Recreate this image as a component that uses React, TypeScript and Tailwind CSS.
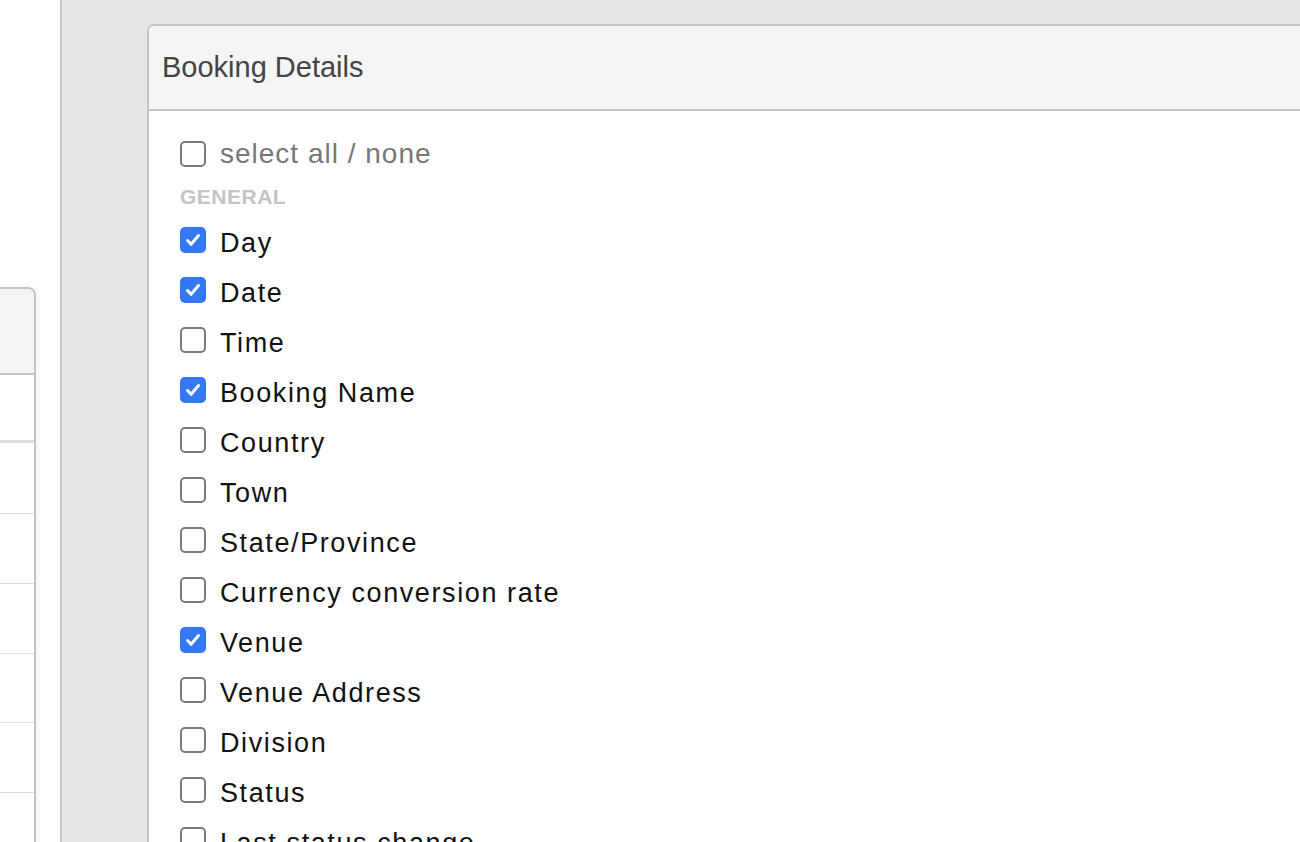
import React from 'react'

const fields: { label: string; checked: boolean }[] = [
  { label: 'Day', checked: true },
  { label: 'Date', checked: true },
  { label: 'Time', checked: false },
  { label: 'Booking Name', checked: true },
  { label: 'Country', checked: false },
  { label: 'Town', checked: false },
  { label: 'State/Province', checked: false },
  { label: 'Currency conversion rate', checked: false },
  { label: 'Venue', checked: true },
  { label: 'Venue Address', checked: false },
  { label: 'Division', checked: false },
  { label: 'Status', checked: false },
  { label: 'Last status change', checked: false },
]

const Box = (props: { checked: boolean }) => {
  const { checked } = props
  if (checked) {
    return (
      <span className="flex h-[26px] w-[26px] shrink-0 items-center justify-center rounded-[5px] bg-[#3478f6]">
        <svg width="20" height="20" viewBox="0 0 20 20" fill="none">
          <path d="M4.5 10.5l3.6 3.8L15.5 5.5" stroke="white" strokeWidth="3" strokeLinecap="round" strokeLinejoin="round" />
        </svg>
      </span>
    )
  }
  return <span className="h-[26px] w-[26px] shrink-0 rounded-[5px] border-2 border-[#7b7b7b] bg-white" />
}

const App = () => {
  return (
    <div className="flex h-[842px] w-[1300px] overflow-hidden bg-white font-['Liberation_Sans',Arial,sans-serif]">
      {/* left column, mostly off screen */}
      <div className="w-[60px] shrink-0 bg-white">
        <div className="mt-[287px] w-[36px] rounded-tr-[8px] border-t-2 border-r-2 border-[#c4c4c4] shadow-[3px_0_4px_rgba(0,0,0,0.04)]">
          <div className="h-[86px] rounded-tr-[6px] border-b-2 border-[#c4c4c4] bg-[#f5f5f5]" />
          <div className="h-[68px] border-b-[3px] border-[#dedede]" />
          <div className="h-[71px] border-b border-[#dedede]" />
          <div className="h-[70px] border-b border-[#dedede]" />
          <div className="h-[70px] border-b border-[#dedede]" />
          <div className="h-[69px] border-b border-[#dedede]" />
          <div className="h-[70px] border-b border-[#dedede]" />
          <div className="h-[70px]" />
        </div>
      </div>

      {/* main gray area */}
      <div className="flex-1 border-l-2 border-[#c4c4c4] bg-[#e6e6e6] pl-[85px] pt-[24px]">
        <div className="h-[900px] rounded-tl-[7px] border-t-2 border-l-2 border-[#c4c4c4] bg-white">
          <div className="flex h-[85px] items-center rounded-tl-[5px] border-b-2 border-[#c4c4c4] bg-[#f5f5f5] pl-[13px]">
            <span className="text-[29px] leading-none text-[#444]">Booking Details</span>
          </div>
          <div className="pl-[31px] pt-[18px]">
            <div className="flex h-[50px] items-center gap-[14px]">
              <Box checked={false} />
              <span className="text-[28px] leading-[40px] tracking-[1px] text-[#777]">select all / none</span>
            </div>
            <div className="h-[36px] text-[21px] font-bold leading-[36px] tracking-[0.5px] text-[#c4c4c4]">GENERAL</div>
            {fields.map((f) => (
              <div key={f.label} className="flex h-[50px] items-center gap-[14px]">
                <Box checked={f.checked} />
                <span className="pt-[6px] text-[27px] leading-[40px] tracking-[1.6px] text-[#111]">{f.label}</span>
              </div>
            ))}
          </div>
        </div>
      </div>
    </div>
  )
}

export default App
